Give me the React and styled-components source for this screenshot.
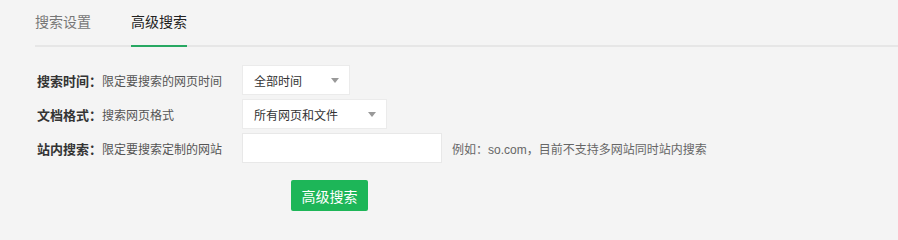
import React from 'react'
import styled, { createGlobalStyle } from "styled-components";

const GlobalStyle = createGlobalStyle`
  body {
    margin: 0;
    background: #f4f4f4;
    font-family: "Liberation Sans", "Noto Sans CJK SC", sans-serif;
  }
`;

const Page = styled.div`
  width: 898px;
  height: 225px;
  overflow: hidden;
`;

const TabBar = styled.div`
  display: flex;
  gap: 40px;
  margin-left: 35px;
  border-bottom: 2px solid #e6e6e6;
`;

const Tab = styled.div`
  padding-top: 12px;
  height: 33px;
  line-height: 20px;
  font-size: 14px;
  color: ${(p) => (p.$active ? "#222" : "#777")};
  border-bottom: 2px solid ${(p) => (p.$active ? "#27a862" : "transparent")};
  margin-bottom: -2px;
`;

const Form = styled.div`
  display: flex;
  flex-direction: column;
  gap: 4px;
  padding-top: 18px;
`;

const Row = styled.div`
  display: flex;
  align-items: center;
  height: 30px;
  padding-left: 37px;
`;

const LabelCell = styled.div`
  width: 205px;
  flex-shrink: 0;
  display: flex;
  align-items: center;
  white-space: nowrap;
`;

const Label = styled.span`
  font-size: 13px;
  font-weight: bold;
  color: #333;
`;

const Desc = styled.span`
  font-size: 12px;
  color: #555;
`;

const Select = styled.div`
  box-sizing: border-box;
  width: ${(p) => p.$width}px;
  height: 30px;
  padding: 0 10px 0 11px;
  background: #fff;
  border: 1px solid #ebebeb;
  display: flex;
  align-items: center;
  justify-content: space-between;
  font-size: 12px;
  color: #333;
`;

const Arrow = styled.span`
  width: 0;
  height: 0;
  border-left: 4.5px solid transparent;
  border-right: 4.5px solid transparent;
  border-top: 5px solid #999;
`;

const TextInput = styled.input`
  box-sizing: border-box;
  width: 200px;
  height: 30px;
  margin: 0;
  border: 1px solid #e8e8e8;
  background: #fff;
  outline: none;
`;

const Hint = styled.span`
  margin-left: 10px;
  font-size: 12px;
  color: #666;
`;

const SubmitButton = styled.button`
  width: 77px;
  height: 31px;
  margin: 13px 0 0 291px;
  border: none;
  border-radius: 2px;
  background: #1db658;
  color: #fff;
  font-size: 14px;
  font-family: inherit;
`;

const App = () => {
  return (
    <Page>
      <GlobalStyle />
      <TabBar>
        <Tab>搜索设置</Tab>
        <Tab $active>高级搜索</Tab>
      </TabBar>
      <Form>
        <Row>
          <LabelCell>
            <Label>搜索时间：</Label>
            <Desc>限定要搜索的网页时间</Desc>
          </LabelCell>
          <Select $width={108}>
            全部时间
            <Arrow />
          </Select>
        </Row>
        <Row>
          <LabelCell>
            <Label>文档格式：</Label>
            <Desc>搜索网页格式</Desc>
          </LabelCell>
          <Select $width={145}>
            所有网页和文件
            <Arrow />
          </Select>
        </Row>
        <Row>
          <LabelCell>
            <Label>站内搜索：</Label>
            <Desc>限定要搜索定制的网站</Desc>
          </LabelCell>
          <TextInput type="text" />
          <Hint>例如：so.com，目前不支持多网站同时站内搜索</Hint>
        </Row>
        <SubmitButton>高级搜索</SubmitButton>
      </Form>
    </Page>
  )
}

export default App
